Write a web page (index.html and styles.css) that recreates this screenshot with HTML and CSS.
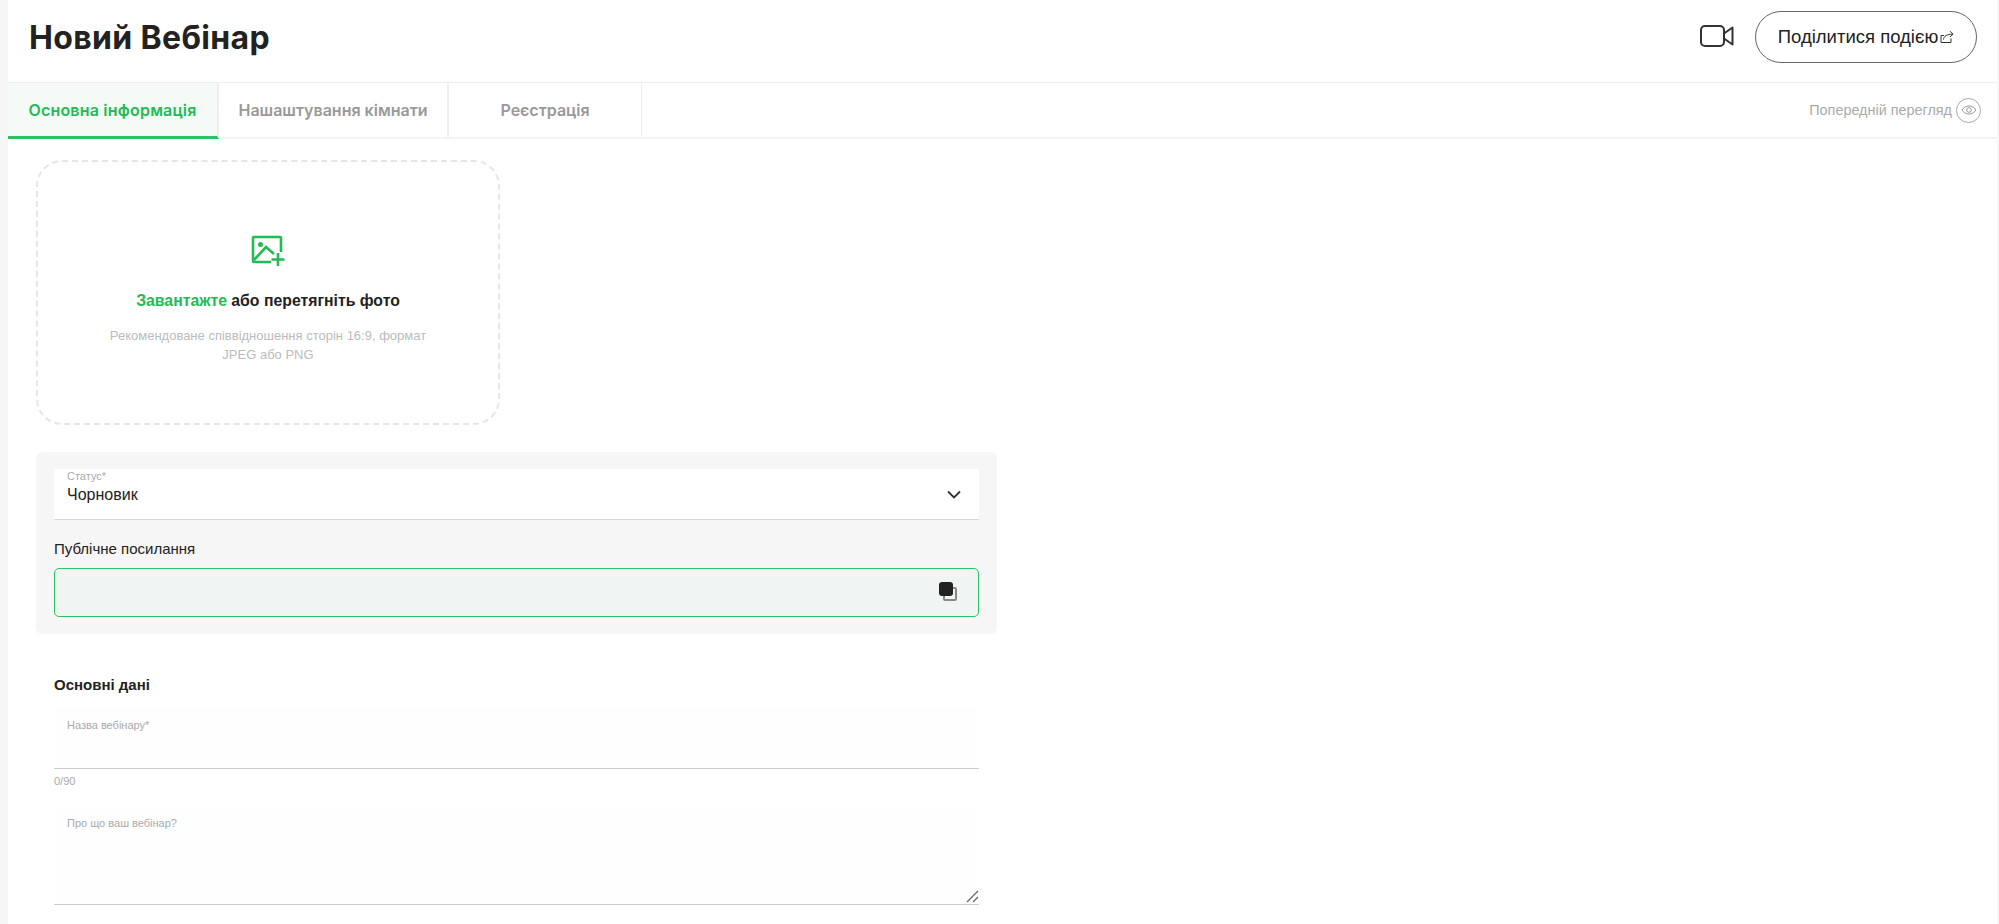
FILE: index.html
```html
<!DOCTYPE html>
<html lang="en">
<head>
    <meta charset="UTF-8">
    <title>Новий Вебінар</title>
    <link rel="stylesheet" href="styles.css">
</head>
<body>
    <div class="page">
        <header class="top-bar">
            <h1>Новий Вебінар</h1>
            <div class="top-actions">
                <svg class="video-icon" width="34" height="22" viewBox="0 0 34 22" fill="none" stroke="#333" stroke-width="2" stroke-linejoin="round">
                    <rect x="1" y="1" width="23" height="20" rx="4"/>
                    <path d="M24 8.5 32.5 2.5V19.5L24 13.5"/>
                </svg>
                <button class="share-btn">
                    <span>Поділитися подією</span>
                    <svg width="14" height="14" viewBox="0 0 14 14" fill="none" stroke="#333" stroke-width="1">
                        <path d="M11 8.5V12.5H1V5.5H4"/>
                        <path d="M3.5 9.5C4 6 6.5 4.2 13 4.2M10 1.2 13 4.2 10 7"/>
                    </svg>
                </button>
            </div>
        </header>

        <nav class="tabs">
            <a class="tab tab-active">Основна інформація</a>
            <a class="tab tab-room">Нашаштування кімнати</a>
            <a class="tab tab-reg">Реєстрація</a>
            <div class="preview">
                <span>Попередній перегляд</span>
                <span class="eye-circle">
                    <svg width="16" height="10" viewBox="0 0 16 10" fill="none" stroke="#999" stroke-width="1">
                        <path d="M1 5C3 2 5.3 1 8 1S13 2 15 5C13 8 10.700 9 8 9S3 8 1 5Z"/>
                        <circle cx="8" cy="5" r="2.300"/>
                    </svg>
                </span>
            </div>
        </nav>

        <main class="content">
            <div class="upload-box">
                <svg class="upload-icon" width="34" height="31" viewBox="0 0 34 31" fill="none" stroke="#22bb55" stroke-width="2.600">
                    <path d="M20 27H3A1 1 0 0 1 2 26V3A1 1 0 0 1 3 2H29A1 1 0 0 1 30 3V17"/>
                    <circle cx="9.500" cy="9.500" r="2.500" fill="#22bb55" stroke="none"/>
                    <path d="M3 25 15 12 23 19"/>
                    <path d="M27 18V31M20.500 24.500H33.500"/>
                </svg>
                <p class="upload-title"><span class="green">Завантажте</span> або перетягніть фото</p>
                <p class="upload-hint">Рекомендоване співвідношення сторін 16:9, формат JPEG або PNG</p>
            </div>

            <section class="status-panel">
                <div class="select-field">
                    <div class="select-text">
                        <div class="field-label">Статус*</div>
                        <div class="select-value">Чорновик</div>
                    </div>
                    <svg width="14" height="9" viewBox="0 0 14 9" fill="none" stroke="#333" stroke-width="1.800">
                        <path d="M1 1.500 7 7.500 13 1.500"/>
                    </svg>
                </div>
                <div class="link-title">Публічне посилання</div>
                <div class="link-field">
                    <span class="copy-icon">
                        <span class="copy-back"></span>
                        <span class="copy-front"></span>
                    </span>
                </div>
            </section>

            <section class="main-data">
                <h2>Основні дані</h2>
                <div class="text-field">
                    <div class="field-label">Назва вебінару*</div>
                </div>
                <div class="counter">0/90</div>
                <div class="text-field area-field">
                    <div class="field-label">Про що ваш вебінар?</div>
                    <svg class="resize-grip" width="13" height="13" viewBox="0 0 13 13" stroke="#666" stroke-width="1.300">
                        <path d="M1 12 12 1M7 12 12 7"/>
                    </svg>
                </div>
            </section>
        </main>
    </div>
</body>
</html>
```

FILE: styles.css
```css
* {
    box-sizing: border-box;
}
body {
    margin: 0;
    background: #f6f6f6;
    font-family: "Liberation Sans", Arial, sans-serif;
    color: #222;
}
.page {
    margin: 0 2px 0 8px;
    height: 924px;
    background: #fff;
    overflow: hidden;
}
.top-bar {
    height: 83px;
    display: flex;
    align-items: center;
    justify-content: space-between;
    padding: 0 20px 8px 21px;
    border-bottom: 1px solid #eceef3;
}
h1 {
    margin: 0;
    font-family: Inter, sans-serif;
    font-size: 32px;
    font-weight: 700;
    letter-spacing: 0.35px;
    color: #222;
}
.top-actions {
    display: flex;
    align-items: center;
    gap: 21px;
}
.video-icon {
    margin-top: -2px;
}
.share-btn {
    width: 222px;
    height: 52px;
    display: flex;
    align-items: center;
    justify-content: center;
    gap: 2px;
    background: #fff;
    border: 1px solid #666;
    border-radius: 27px;
    font-family: inherit;
    font-size: 18.500px;
    color: #222;
}
.tabs {
    height: 56px;
    display: flex;
    border-bottom: 2px solid #f2f3f6;
}
.tab {
    display: flex;
    align-items: center;
    justify-content: center;
    font-family: Inter, sans-serif;
    font-size: 16px;
    font-weight: 600;
    color: #999;
    border-right: 2px solid #eceef3;
}
.tab-active {
    width: 211px;
    height: 56px;
    background: #f4faf6;
    color: #22bb55;
    letter-spacing: 0.2px;
    border-bottom: 3px solid #2cc163;
}
.tab-room {
    width: 230px;
}
.tab-reg {
    width: 193px;
    border-right-width: 1px;
}
.preview {
    margin-left: auto;
    padding-right: 16px;
    display: flex;
    align-items: center;
    gap: 4px;
    font-size: 14.400px;
    color: #aaa;
}
.eye-circle {
    width: 25px;
    height: 25px;
    display: flex;
    align-items: center;
    justify-content: center;
    border: 1px solid #aaa;
    border-radius: 50%;
}
.content {
    padding: 21px 0 0 28px;
}
.upload-box {
    width: 464px;
    height: 265px;
    padding-top: 73px;
    border: 2px dashed #e6e6e6;
    border-radius: 26px;
    text-align: center;
}
.upload-icon {
    display: block;
    margin: 0 auto;
}
.upload-title {
    margin: 26px 0 0;
    font-size: 15.800px;
    font-weight: 700;
}
.green {
    color: #22bb55;
}
.upload-hint {
    width: 340px;
    margin: 16px auto 0;
    font-size: 13px;
    line-height: 19px;
    color: #bbb;
}
.status-panel {
    width: 961px;
    height: 182px;
    margin-top: 27px;
    padding: 17px 18px 0;
    background: #f6f6f6;
    border-radius: 6px;
}
.select-field {
    height: 51px;
    padding: 0 18px 0 13px;
    display: flex;
    align-items: center;
    justify-content: space-between;
    background: #fff;
    border-bottom: 1px solid #d6d6d6;
}
.select-text {
    align-self: flex-start;
    padding-top: 1px;
}
.field-label {
    font-size: 11px;
    line-height: 13px;
    color: #aaa;
}
.select-value {
    margin-top: 2px;
    font-size: 16px;
    line-height: 20px;
}
.link-title {
    margin-top: 20px;
    font-size: 15px;
    line-height: 18px;
}
.link-field {
    height: 49px;
    margin-top: 10px;
    padding: 0 21px 2px 0;
    display: flex;
    align-items: center;
    justify-content: flex-end;
    background: #f0f4f3;
    border: 1px solid #2cc163;
    border-radius: 5px;
}
.copy-icon {
    position: relative;
    width: 19px;
    height: 19px;
}
.copy-back {
    position: absolute;
    right: 0;
    bottom: 0;
    width: 14px;
    height: 14px;
    border: 2px solid #888;
    border-radius: 2px;
}
.copy-front {
    position: absolute;
    left: 1px;
    top: 0;
    width: 14px;
    height: 14px;
    background: #222;
    border-radius: 3px;
}
.main-data {
    width: 961px;
    padding: 42px 18px 0;
}
h2 {
    margin: 0;
    font-size: 15px;
    line-height: 18px;
    font-weight: 700;
}
.text-field {
    position: relative;
    height: 61px;
    margin-top: 14px;
    padding: 11px 13px 0;
    background: #fefefe;
    border-bottom: 1px solid #ccc;
}
.counter {
    margin-top: 5px;
    font-size: 11px;
    line-height: 14px;
    color: #aaa;
}
.area-field {
    height: 99px;
    margin-top: 18px;
}
.resize-grip {
    position: absolute;
    right: 0;
    bottom: 1px;
}
```
